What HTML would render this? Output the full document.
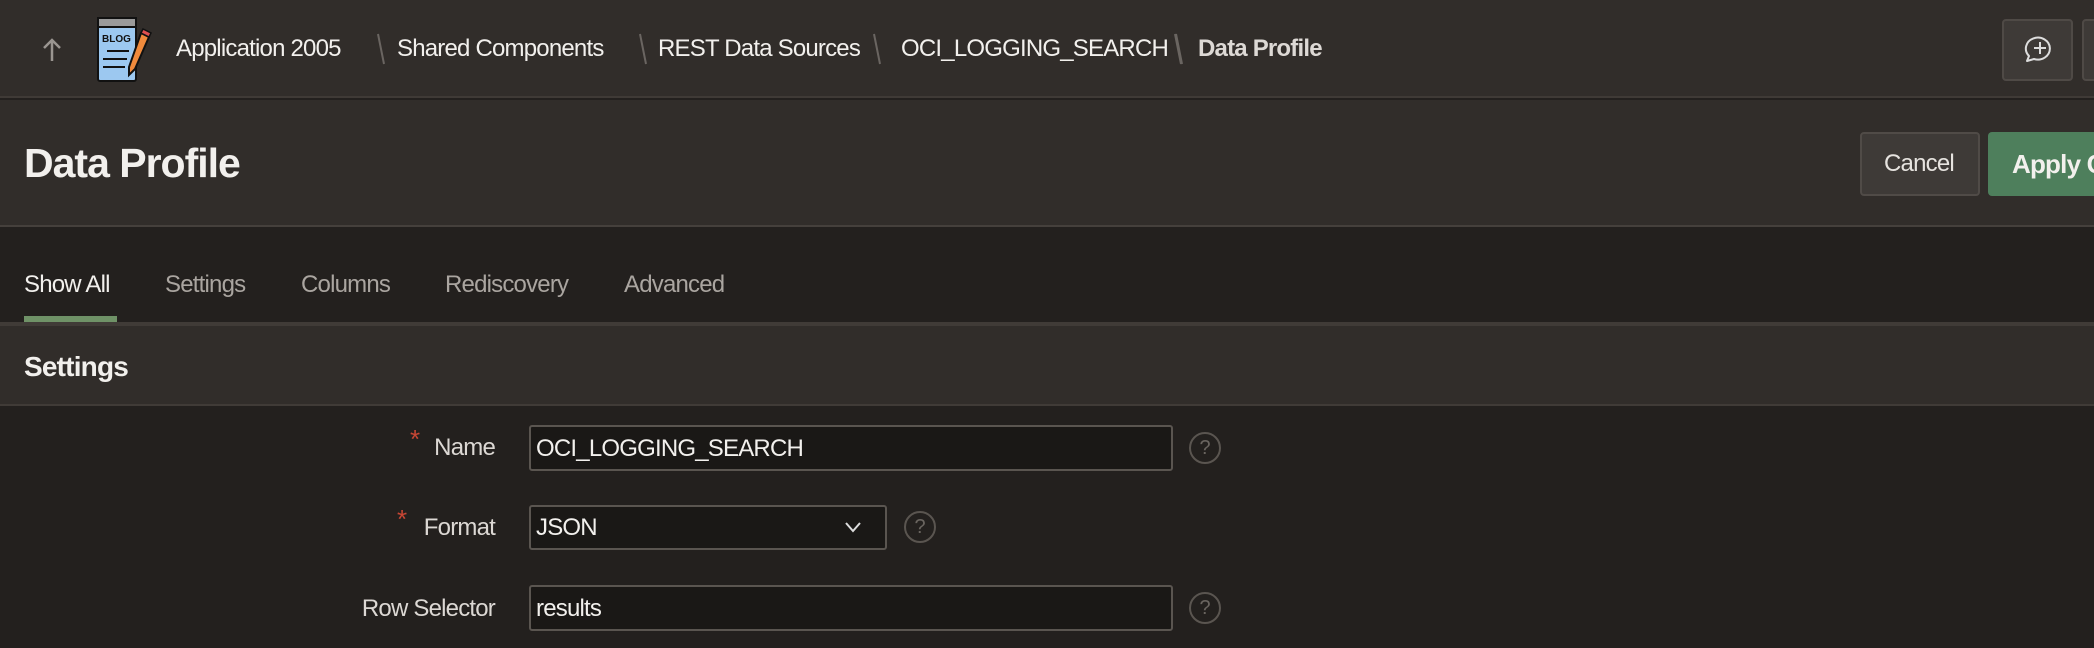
<!DOCTYPE html>
<html><head><meta charset="utf-8"><style>
*{margin:0;padding:0;box-sizing:border-box}
body{width:2094px;height:648px;overflow:hidden;background:#23201e;font-family:"Liberation Sans",sans-serif;color:#f2f0ed;position:relative}
.a{position:absolute;white-space:nowrap}
.t{font-size:24px;letter-spacing:-0.8px;line-height:1}
</style></head><body>
<div class="a" style="left:0;top:0;width:2094px;height:98px;background:#312d2a;border-bottom:2px solid #3f3a36"></div>
<svg class="a" style="left:40px;top:37px" width="24" height="26" viewBox="0 0 24 26"><path d="M12 24V3M4 11l8-8 8 8" stroke="#9a9590" stroke-width="2.5" fill="none"/></svg>
<svg class="a" style="left:97px;top:17px" width="56" height="66" viewBox="0 0 56 66">
<rect x="1" y="1" width="38" height="63" rx="2" fill="#9cc8f0" stroke="#111" stroke-width="2"/>
<rect x="1" y="1" width="38" height="9" fill="#9a9a9a" stroke="#111" stroke-width="2"/>
<text x="5" y="25" font-size="10" font-weight="bold" fill="#111" font-family="Liberation Sans">BLOG</text>
<path d="M10 34h22M6 42h24M6 50h22" stroke="#111" stroke-width="2"/>
<path d="M44 16l8 4-14 32-6 6 0-8z" fill="#f08a3c" stroke="#111" stroke-width="2"/>
<path d="M44 16l2-4 8 4-2 4z" fill="#e05050" stroke="#111" stroke-width="1.5"/>
</svg>
<div class="a t" style="left:176px;top:37px">Application 2005</div>
<div class="a t" style="left:397px;top:37px">Shared Components</div>
<div class="a t" style="left:658px;top:37px">REST Data Sources</div>
<div class="a t" style="left:901px;top:37px">OCI_LOGGING_SEARCH</div>
<div class="a t" style="left:1198px;top:37px;font-weight:bold;color:#ddd9d5">Data Profile</div>
<svg class="a" style="left:370px;top:30px" width="900" height="40"><g stroke="#6a6561" stroke-width="2"><path d="M8 4l6 30M270 4l6 30M504 4l6 30M805 4l6 30"/></g></svg>
<svg class="a" style="left:1170px;top:30px" width="20" height="40"><path d="M6 4l6 30" stroke="#6a6561" stroke-width="2"/></svg>
<div class="a" style="left:2002px;top:19px;width:71px;height:62px;background:#3e3a37;border:2px solid #4f4a46;border-radius:4px"></div>
<svg class="a" style="left:2019px;top:33px" width="36" height="32" viewBox="0 0 36 32"><path d="M8 28l2-5a12 11 0 1 1 5 3z" fill="none" stroke="#ddd" stroke-width="2" stroke-linejoin="round"/><path d="M21 9v12M15 15h12" stroke="#ddd" stroke-width="2"/></svg>
<div class="a" style="left:2082px;top:19px;width:20px;height:62px;background:#3e3a37;border:2px solid #4f4a46;border-radius:4px"></div>

<div class="a" style="left:0;top:100px;width:2094px;height:127px;background:#312d2a;border-bottom:2px solid #45403c"></div>
<div class="a" style="left:24px;top:143px;font-size:41px;font-weight:bold;letter-spacing:-1px;line-height:1">Data Profile</div>
<div class="a" style="left:1860px;top:132px;width:120px;height:64px;background:#3e3a37;border:2px solid #504b47;border-radius:4px"></div>
<div class="a t" style="left:1884px;top:152px;color:#e6e3df">Cancel</div>
<div class="a" style="left:1988px;top:132px;width:120px;height:64px;background:#4e7f5c;border-radius:4px"></div>
<div class="a t" style="left:2012px;top:151px;font-weight:bold;font-size:26px">Apply C</div>

<div class="a" style="left:0;top:229px;width:2094px;height:93px;background:#23201e"></div>
<div class="a t" style="left:24px;top:273px">Show All</div>
<div class="a t" style="left:165px;top:273px;color:#aaa5a0">Settings</div>
<div class="a t" style="left:301px;top:273px;color:#aaa5a0">Columns</div>
<div class="a t" style="left:445px;top:273px;color:#aaa5a0">Rediscovery</div>
<div class="a t" style="left:624px;top:273px;color:#aaa5a0">Advanced</div>
<div class="a" style="left:24px;top:316px;width:93px;height:6px;background:#6f9267"></div>
<div class="a" style="left:0;top:322px;width:2094px;height:84px;background:#312d2a;border-top:4px solid #403b37;border-bottom:2px solid #403b37"></div>
<div class="a" style="left:24px;top:353px;font-size:28px;font-weight:bold;letter-spacing:-0.8px;line-height:1">Settings</div>

<div class="a" style="left:410px;top:424px;color:#c74634;font-size:26px">*</div>
<div class="a t" style="left:430px;top:436px;width:65px;text-align:right;color:#dcd8d4">Name</div>
<div class="a" style="left:529px;top:425px;width:644px;height:46px;background:#1a1816;border:2px solid #5a5550;border-radius:3px"></div>
<div class="a t" style="left:536px;top:437px">OCI_LOGGING_SEARCH</div>
<div class="a" style="left:1189px;top:432px;width:32px;height:32px;border:2px solid #5a5550;border-radius:50%;color:#6a6560;font-size:20px;text-align:center;line-height:28px">?</div>

<div class="a" style="left:397px;top:504px;color:#c74634;font-size:26px">*</div>
<div class="a t" style="left:400px;top:516px;width:95px;text-align:right;color:#dcd8d4">Format</div>
<div class="a" style="left:529px;top:505px;width:358px;height:45px;background:#1a1816;border:2px solid #5a5550;border-radius:3px"></div>
<div class="a t" style="left:536px;top:516px">JSON</div>
<svg class="a" style="left:844px;top:520px" width="18" height="14"><path d="M2 3l7 8 7-8" stroke="#ddd" stroke-width="2" fill="none"/></svg>
<div class="a" style="left:904px;top:511px;width:32px;height:32px;border:2px solid #5a5550;border-radius:50%;color:#6a6560;font-size:20px;text-align:center;line-height:28px">?</div>

<div class="a t" style="left:300px;top:597px;width:195px;text-align:right;color:#dcd8d4">Row Selector</div>
<div class="a" style="left:529px;top:585px;width:644px;height:46px;background:#1a1816;border:2px solid #5a5550;border-radius:3px"></div>
<div class="a t" style="left:536px;top:597px">results</div>
<div class="a" style="left:1189px;top:592px;width:32px;height:32px;border:2px solid #5a5550;border-radius:50%;color:#6a6560;font-size:20px;text-align:center;line-height:28px">?</div>
</body></html>
